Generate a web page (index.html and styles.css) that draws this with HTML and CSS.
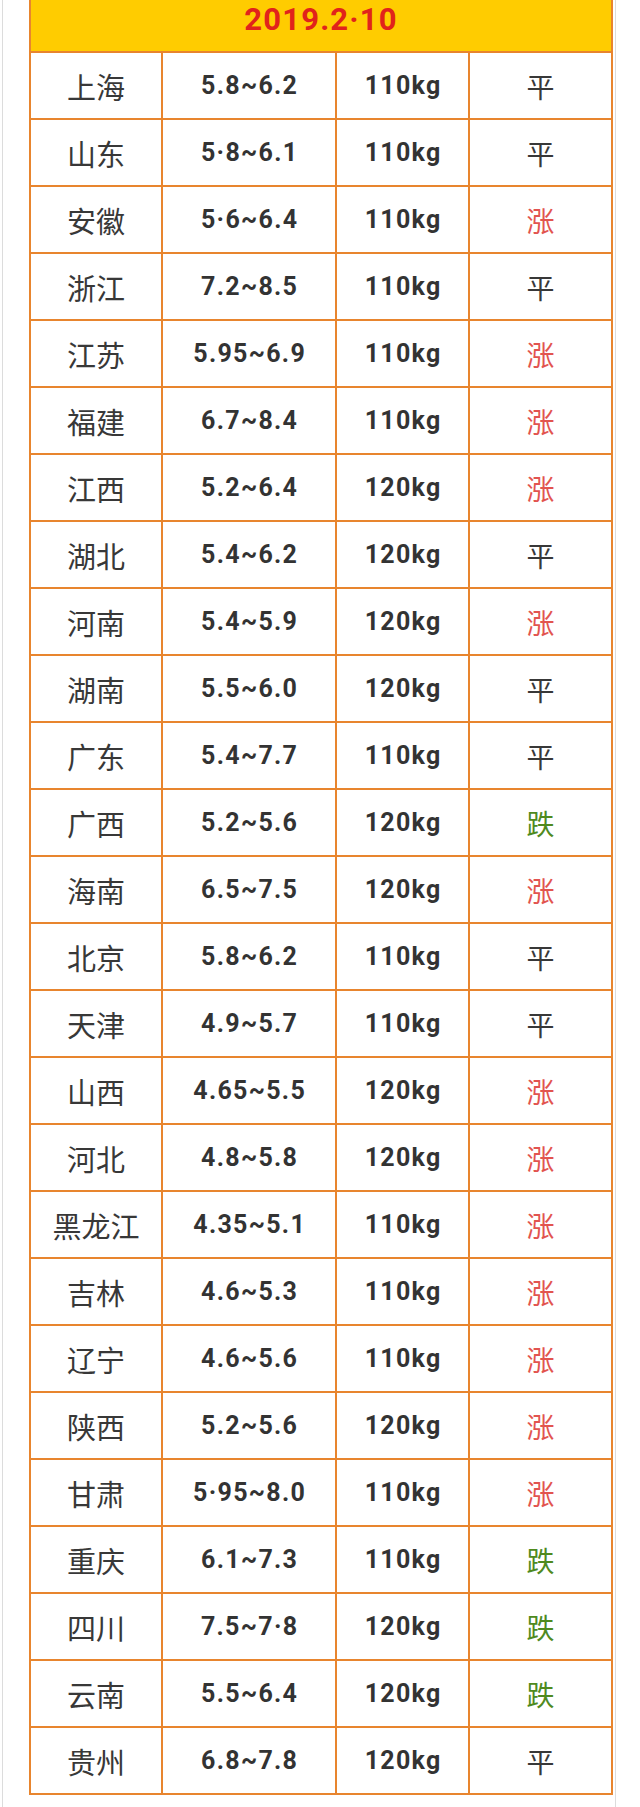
FILE: index.html
```html
<!DOCTYPE html>
<html lang="zh-CN">
<head>
<meta charset="utf-8">
<title>2019.2·10</title>
<link rel="stylesheet" href="styles.css">
</head>
<body>
<div class="page">
  <table class="prices">
    <colgroup>
      <col class="c1"><col class="c2"><col class="c3"><col class="c4">
    </colgroup>
    <thead>
      <tr><th colspan="4" class="date">2019.2·10</th></tr>
    </thead>
    <tbody>
      <tr><td class="prov">上海</td><td class="num">5.8~6.2</td><td class="num">110kg</td><td class="trend">平</td></tr>
      <tr><td class="prov">山东</td><td class="num">5·8~6.1</td><td class="num">110kg</td><td class="trend">平</td></tr>
      <tr><td class="prov">安徽</td><td class="num">5·6~6.4</td><td class="num">110kg</td><td class="trend up">涨</td></tr>
      <tr><td class="prov">浙江</td><td class="num">7.2~8.5</td><td class="num">110kg</td><td class="trend">平</td></tr>
      <tr><td class="prov">江苏</td><td class="num">5.95~6.9</td><td class="num">110kg</td><td class="trend up">涨</td></tr>
      <tr><td class="prov">福建</td><td class="num">6.7~8.4</td><td class="num">110kg</td><td class="trend up">涨</td></tr>
      <tr><td class="prov">江西</td><td class="num">5.2~6.4</td><td class="num">120kg</td><td class="trend up">涨</td></tr>
      <tr><td class="prov">湖北</td><td class="num">5.4~6.2</td><td class="num">120kg</td><td class="trend">平</td></tr>
      <tr><td class="prov">河南</td><td class="num">5.4~5.9</td><td class="num">120kg</td><td class="trend up">涨</td></tr>
      <tr><td class="prov">湖南</td><td class="num">5.5~6.0</td><td class="num">120kg</td><td class="trend">平</td></tr>
      <tr><td class="prov">广东</td><td class="num">5.4~7.7</td><td class="num">110kg</td><td class="trend">平</td></tr>
      <tr><td class="prov">广西</td><td class="num">5.2~5.6</td><td class="num">120kg</td><td class="trend down">跌</td></tr>
      <tr><td class="prov">海南</td><td class="num">6.5~7.5</td><td class="num">120kg</td><td class="trend up">涨</td></tr>
      <tr><td class="prov">北京</td><td class="num">5.8~6.2</td><td class="num">110kg</td><td class="trend">平</td></tr>
      <tr><td class="prov">天津</td><td class="num">4.9~5.7</td><td class="num">110kg</td><td class="trend">平</td></tr>
      <tr><td class="prov">山西</td><td class="num">4.65~5.5</td><td class="num">120kg</td><td class="trend up">涨</td></tr>
      <tr><td class="prov">河北</td><td class="num">4.8~5.8</td><td class="num">120kg</td><td class="trend up">涨</td></tr>
      <tr><td class="prov">黑龙江</td><td class="num">4.35~5.1</td><td class="num">110kg</td><td class="trend up">涨</td></tr>
      <tr><td class="prov">吉林</td><td class="num">4.6~5.3</td><td class="num">110kg</td><td class="trend up">涨</td></tr>
      <tr><td class="prov">辽宁</td><td class="num">4.6~5.6</td><td class="num">110kg</td><td class="trend up">涨</td></tr>
      <tr><td class="prov">陕西</td><td class="num">5.2~5.6</td><td class="num">120kg</td><td class="trend up">涨</td></tr>
      <tr><td class="prov">甘肃</td><td class="num">5·95~8.0</td><td class="num">110kg</td><td class="trend up">涨</td></tr>
      <tr><td class="prov">重庆</td><td class="num">6.1~7.3</td><td class="num">110kg</td><td class="trend down">跌</td></tr>
      <tr><td class="prov">四川</td><td class="num">7.5~7·8</td><td class="num">120kg</td><td class="trend down">跌</td></tr>
      <tr><td class="prov">云南</td><td class="num">5.5~6.4</td><td class="num">120kg</td><td class="trend down">跌</td></tr>
      <tr><td class="prov">贵州</td><td class="num">6.8~7.8</td><td class="num">120kg</td><td class="trend">平</td></tr>
    </tbody>
  </table>
</div>
</body>
</html>
```

FILE: styles.css
```css
html, body {
  margin: 0;
  padding: 0;
  background: #ffffff;
}

.page {
  box-sizing: border-box;
  margin-left: 2px;
  width: 614px;
  min-height: 1807px;
  border-left: 1px solid #dcdcdc;
  border-right: 1px solid #dcdcdc;
  padding-left: 26px;
}

.prices {
  border-collapse: collapse;
  table-layout: fixed;
  width: 582px;
  font-family: Roboto, "Noto Sans CJK SC", sans-serif;
  color: #333333;
}

.c1 { width: 132px; }
.c2 { width: 174px; }
.c3 { width: 133px; }
.c4 { width: 143px; }

.prices th,
.prices td {
  border: 2px solid #e8852e;
  text-align: center;
  padding: 0;
}

.prices thead th {
  border-top: none;
}

.date {
  background: #ffcc00;
  color: #e1231b;
  font-family: Roboto, sans-serif;
  font-weight: 700;
  font-size: 31px;
  letter-spacing: 1.2px;
  height: 51px;
  line-height: 40px;
  vertical-align: top;
}

.prices tbody tr {
  height: 67px;
}

.prov {
  font-family: "Noto Sans CJK SC", sans-serif;
  font-size: 29px;
  font-weight: 400;
  color: #383838;
}

.num {
  font-family: Roboto, sans-serif;
  font-size: 25px;
  font-weight: 700;
  letter-spacing: 1.3px;
  text-indent: 1.3px;
}

.trend {
  font-family: "Noto Sans CJK SC", sans-serif;
  font-size: 28px;
  font-weight: 400;
  color: #383838;
}

.trend.up {
  color: #e2544f;
}

.trend.down {
  color: #4f8a1e;
}
```
